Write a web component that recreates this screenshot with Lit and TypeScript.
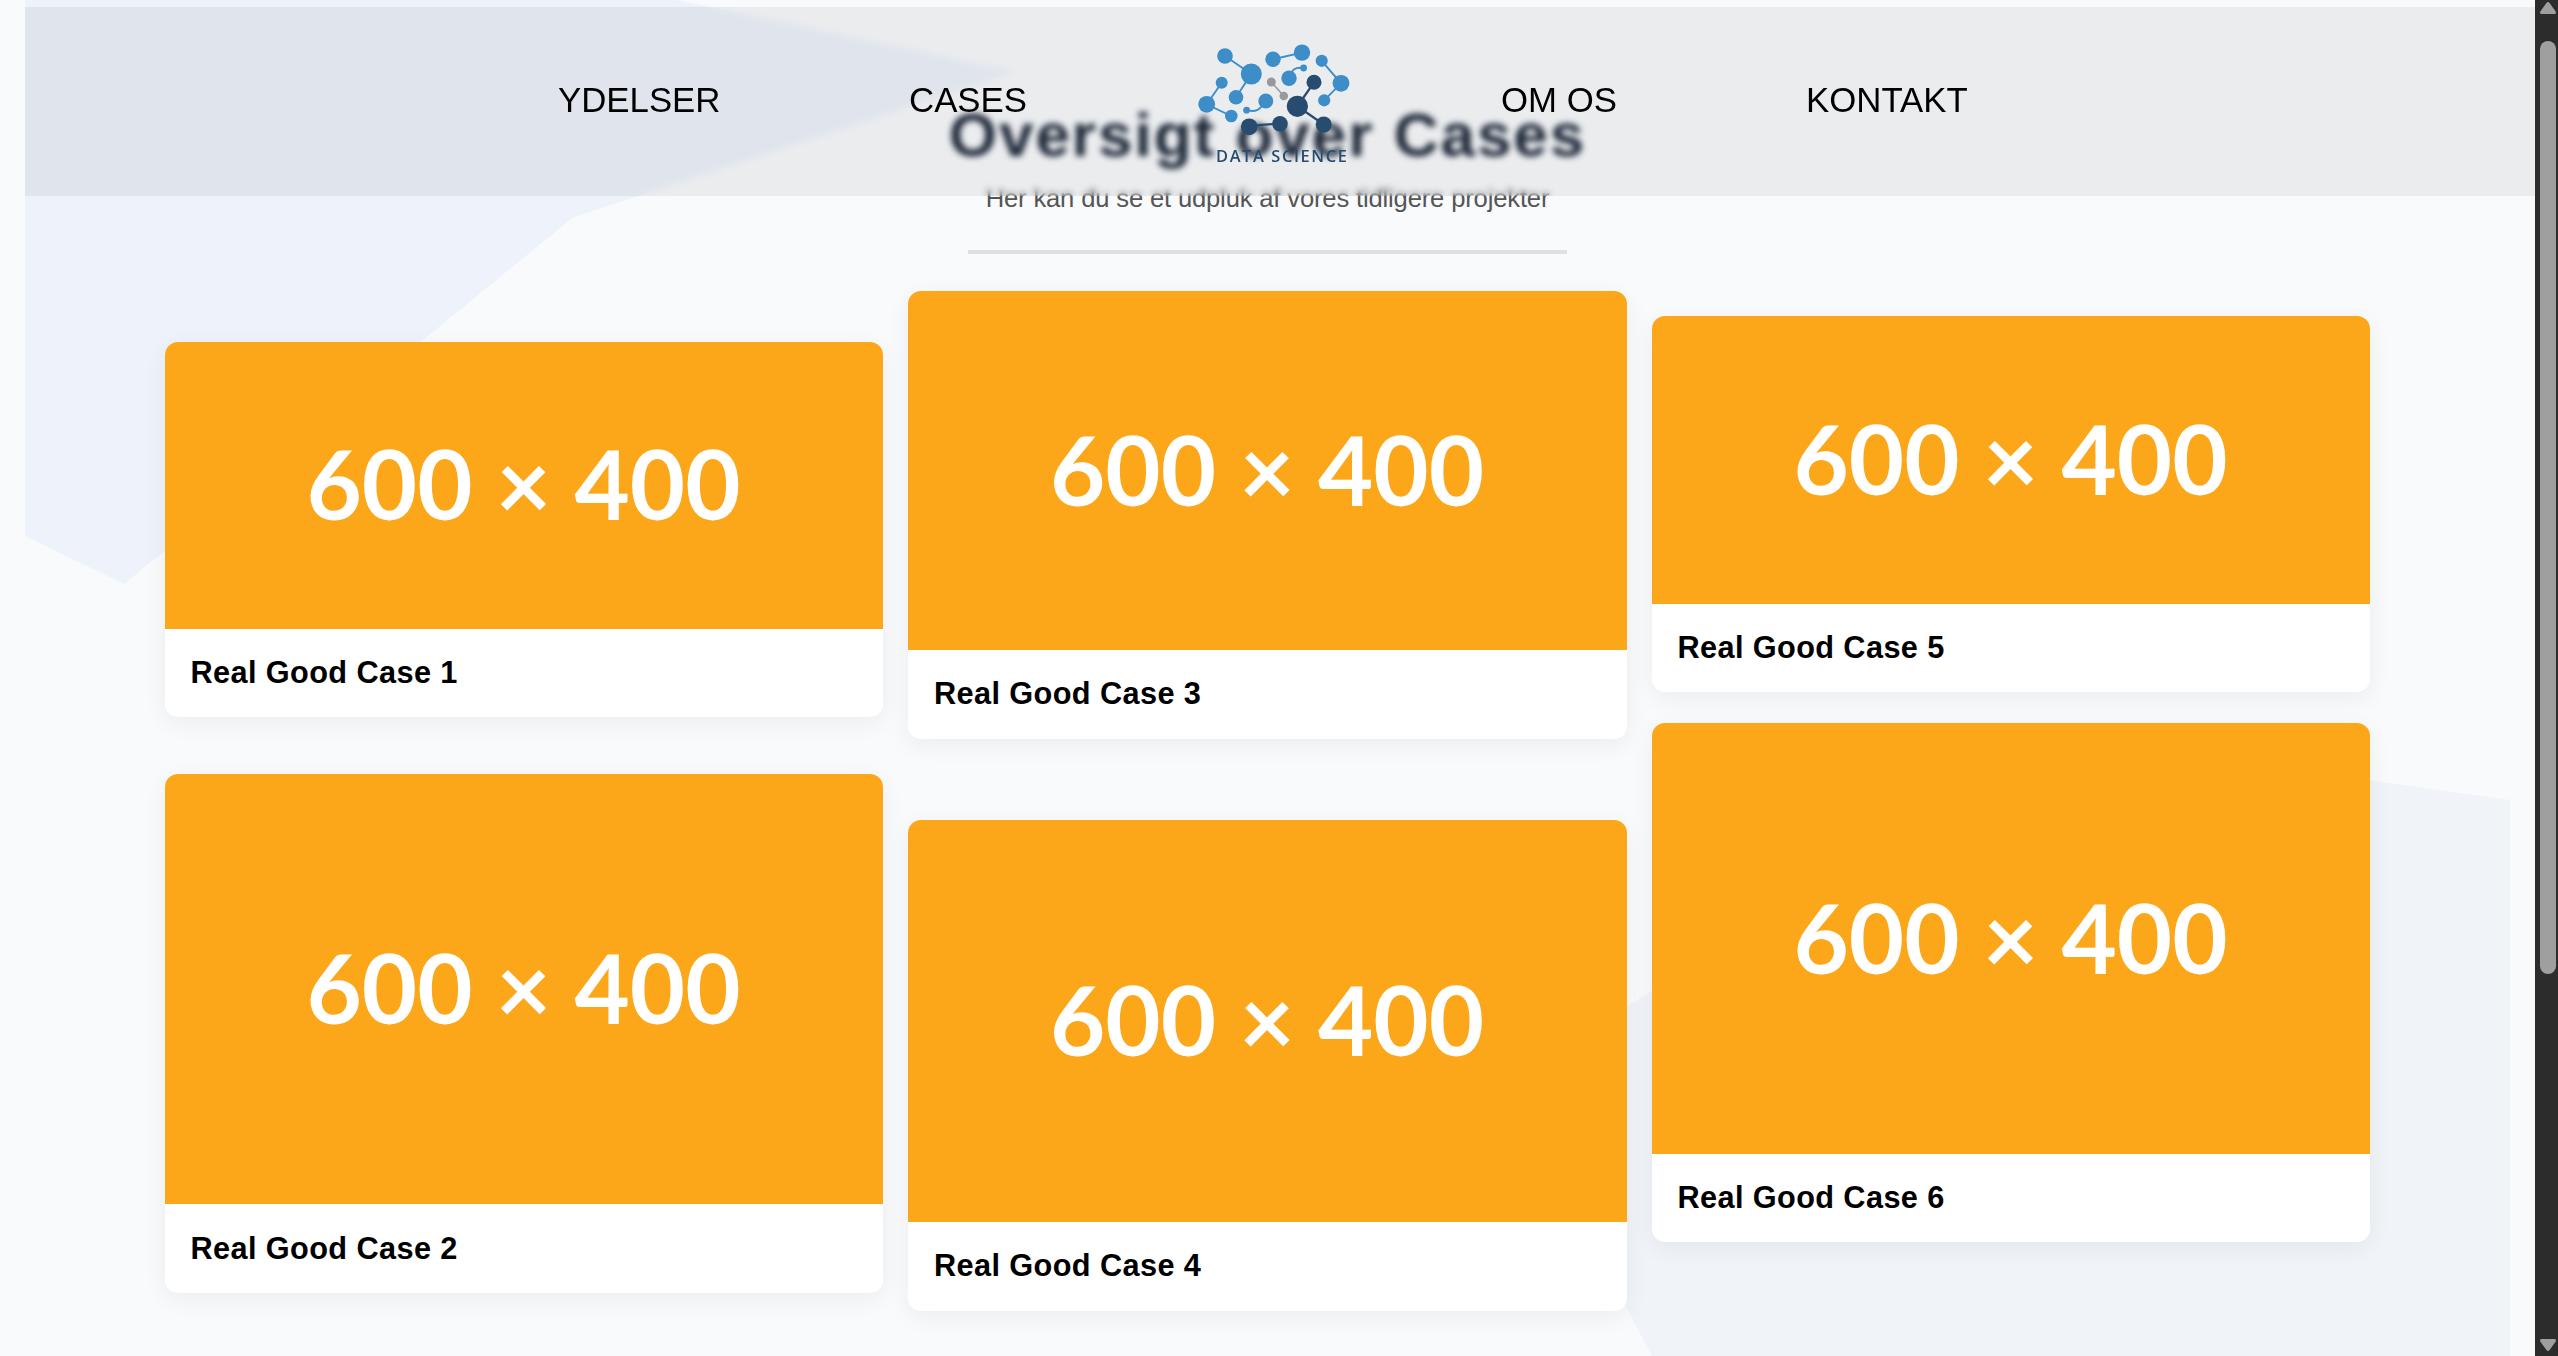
import { LitElement, html, css, svg } from "lit";
import { customElement, property } from "lit/decorators.js";

const BLUE = "#3d8dc8";
const NAVY = "#284b70";
const GREY = "#979a9c";

type Node = [number, number, number, string];
const NODES: Node[] = [
  [55, 36, 7.8, BLUE], [81.3, 54, 10.5, BLUE], [66, 77.3, 7.3, BLUE],
  [51.7, 62.8, 6, BLUE], [36.7, 84.3, 8.4, BLUE], [61.3, 96, 6.3, BLUE],
  [76.6, 90.2, 3.4, BLUE], [95.8, 81, 7.5, BLUE],
  [103, 39.3, 7.7, BLUE], [132, 32.6, 8.2, BLUE],
  [119, 58.3, 7.7, BLUE], [133.6, 48, 3.4, BLUE],
  [151.7, 40.8, 6.1, BLUE], [171, 63.3, 8.4, BLUE], [154.2, 80.3, 6.1, BLUE],
  [101.3, 62, 4.5, GREY], [113.8, 76, 4.3, GREY],
  [144, 62.3, 7.5, NAVY], [127.4, 86.3, 10.6, NAVY], [153.7, 104.5, 8, NAVY],
  [79.2, 106.8, 8.4, NAVY], [110, 103.7, 7.8, NAVY],
];
const LINKS: [string, string, number][] = [
  ["M55 36L81.3 54L66 77.3M51.7 62.8L36.7 84.3L61.3 96M103 39.3L132 32.6M151.7 40.8L171 63.3L154.2 80.3", BLUE, 1.9],
  ["M76.6 90.2C86 92.5 90 90 95.8 81M119 58.3C122 49 125 47 133.6 48", BLUE, 1.9],
  ["M101.3 62L113.8 76", GREY, 1.6],
  ["M144 62.3L127.4 86.3L153.7 104.5M79.2 106.8C90 104.5 100 104.5 110 103.7", NAVY, 2.3],
];

@customElement("brand-logo")
class BrandLogo extends LitElement {
  static styles = css`
    :host { display: block; width: 220px; height: 180px; }
    svg { display: block; }
    text { font: 600 16.4px "Open Sans", "Noto Sans", sans-serif; }
  `;
  render() {
    return html`<svg width="220" height="180" viewBox="0 0 220 180">
      ${LINKS.map(([d, c, w]) => svg`<path d=${d} fill="none" stroke=${c} stroke-width=${w} />`)}
      ${NODES.map(([x, y, r, c]) => svg`<circle cx=${x} cy=${y} r=${r} fill=${c} />`)}
      <text x="46" y="142" textLength="131" fill=${NAVY}>DATA SCIENCE</text>
    </svg>`;
  }
}

@customElement("case-card")
class CaseCard extends LitElement {
  @property() name = "";
  @property({ type: Number }) picture = 287.2;
  static styles = css`
    :host { display: block; }
    .card { border-radius: 13px; overflow: hidden; background: #fff; box-shadow: 0 6px 25px rgba(0, 0, 0, 0.06); }
    .picture {
      display: flex; align-items: center; justify-content: center;
      box-sizing: border-box; padding: 0 1px 2px 0;
      background: #fca61a; color: #fff;
      font: 700 95.5px/1 Lato, sans-serif;
    }
    .title {
      height: 88.7px; box-sizing: border-box; padding: 26.4px 25.5px 0; margin: 0;
      font: 700 30.7px/36px "Liberation Sans", Arial, sans-serif; color: #000;
      letter-spacing: 0.4px;
    }
  `;
  render() {
    return html`<article class="card">
      <div class="picture" style="height:${this.picture}px">600 × 400</div>
      <h3 class="title">${this.name}</h3>
    </article>`;
  }
}

@customElement("scroll-rail")
class ScrollRail extends LitElement {
  static styles = css`
    :host { display: block; width: 23px; height: 1356px; background: #2c2c2c; }
    .rail { display: flex; flex-direction: column; height: 1356px; box-sizing: border-box; padding: 2px 2px 5px 5px; }
    .thumb { height: 933px; margin-top: 27px; border-radius: 8px; background: #9f9f9f; }
    .down { margin-top: auto; }
    svg { display: block; fill: #9f9f9f; }
  `;
  render() {
    return html`<div class="rail">
      <svg width="16" height="12" viewBox="0 0 16 12"><path d="M6.4 .9Q8-.9 9.6 .9L15.7 9.6Q16.5 12 14.5 12H1.5Q-.5 12 .3 9.6Z" /></svg>
      <div class="thumb"></div>
      <svg class="down" width="16" height="12" viewBox="0 0 16 12"><path d="M6.4 11.1Q8 12.9 9.6 11.1L15.7 2.4Q16.5 0 14.5 0H1.5Q-.5 0 .3 2.4Z" /></svg>
    </div>`;
  }
}

const COLUMNS = [
  { cls: "c1", cards: [["Real Good Case 1", 287.2], ["Real Good Case 2", 430.8]] },
  { cls: "c2", cards: [["Real Good Case 3", 359], ["Real Good Case 4", 402]] },
  { cls: "c3", cards: [["Real Good Case 5", 287.4], ["Real Good Case 6", 430.8]] },
] as const;

@customElement("app-root")
class AppRoot extends LitElement {
  static styles = css`
    :host {
      display: block; position: relative; width: 2558px; height: 1356px; overflow: hidden;
      background: #f8fafc; font-family: "Liberation Sans", Arial, sans-serif;
    }
    .backdrop { position: absolute; left: 0; top: 0; }
    .page { position: relative; display: flex; height: 1356px; }
    .content { width: 2535px; display: flex; flex-direction: column; align-items: center; }
    h1 {
      margin: 98px 0 0; font-size: 62px; line-height: 74px; font-weight: 700;
      letter-spacing: 2px; color: #1e293b;
    }
    .lead { margin: 11px 0 0; font-size: 25.6px; line-height: 30px; letter-spacing: -0.16px; color: #555; }
    .rule { width: 599px; height: 4px; margin-top: 37px; background: #dfe0e2; }
    .columns { display: flex; gap: 25.3px; margin-top: 37px; }
    .col { width: 718.2px; display: flex; flex-direction: column; }
    .c1 { padding-top: 50.6px; gap: 56.2px; }
    .c2 { gap: 81.3px; }
    .c3 { padding-top: 25.4px; gap: 30.4px; }
    .header {
      position: absolute; left: 25px; top: 7px; width: 2510px; height: 189px;
      background: rgba(0, 0, 0, 0.055); backdrop-filter: blur(3.2px);
    }
    .nav { display: flex; align-items: center; height: 189px; font-size: 34.8px; color: #000; }
    .nav a { white-space: nowrap; padding-bottom: 2.5px; }
    .n1 { margin-left: 533px; width: 351px; }
    .n2 { width: 261px; }
    .n3 { margin-left: 111px; width: 305px; }
    brand-logo { margin-top: 17px; }
  `;
  render() {
    return html`
      <svg class="backdrop" width="2535" height="1356" viewBox="0 0 2535 1356">
        <path d="M25 0H677L1015 72L573 217.5L124 584L25 536Z" fill="#eef3fb" />
        <path d="M2510 800V1356H1652L1627 1309L1560 1183V1047L1652 991L2000 728Z" fill="#f0f4f9" />
      </svg>
      <div class="page">
        <main class="content">
          <h1>Oversigt over Cases</h1>
          <p class="lead">Her kan du se et udpluk af vores tidligere projekter</p>
          <div class="rule"></div>
          <section class="columns">
            ${COLUMNS.map((col) => html`<div class="col ${col.cls}">
              ${col.cards.map(([name, h]) => html`<case-card .name=${name} .picture=${h}></case-card>`)}
            </div>`)}
          </section>
        </main>
        <scroll-rail></scroll-rail>
      </div>
      <header class="header">
        <nav class="nav">
          <a class="n1">YDELSER</a><a class="n2">CASES</a>
          <brand-logo></brand-logo>
          <a class="n3">OM OS</a><a>KONTAKT</a>
        </nav>
      </header>
    `;
  }
}
